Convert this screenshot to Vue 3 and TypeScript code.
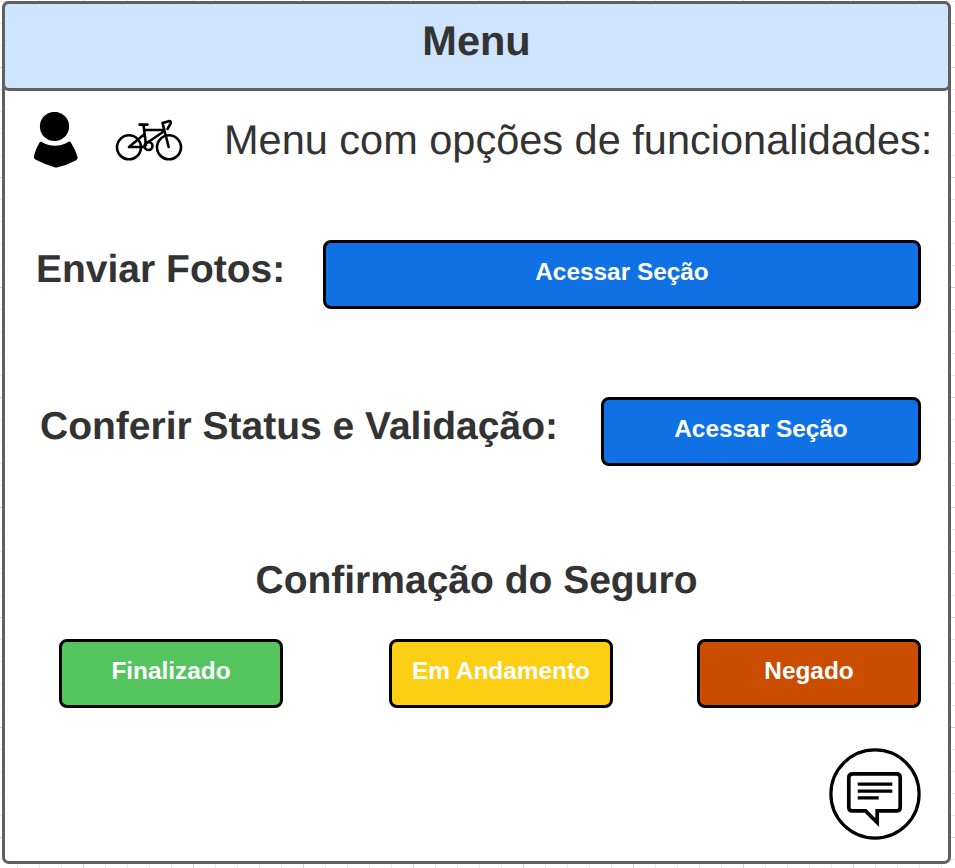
<script setup lang="ts">
interface StatusOption {
  label: string
  tone: string
}

interface Section {
  title: string
  action: string
  kind: string
}

const sections: Section[] = [
  { title: 'Enviar Fotos:', action: 'Acessar Seção', kind: 'photos' },
  { title: 'Conferir Status e Validação:', action: 'Acessar Seção', kind: 'validation' },
]

const statuses: StatusOption[] = [
  { label: 'Finalizado', tone: 'done' },
  { label: 'Em Andamento', tone: 'progress' },
  { label: 'Negado', tone: 'denied' },
]
</script>

<template>
  <div class="canvas">
    <main class="frame">
      <header class="header"><h1>Menu</h1></header>

      <section class="intro">
        <svg class="user" viewBox="0 0.6 46 56" aria-hidden="true">
          <circle cx="21.500" cy="15" r="14.6" />
          <path d="M8.2 30.4C16.5 35.7 27.500 35.700 35.500 30.400Q37 29.700 38 31.300Q42.500 38.500 44.600 45.500Q45 48 42.700 49.200Q33.500 54.200 23.800 56Q22.600 56.200 21.400 55.800Q11.500 53 2.300 48.200Q.500 47.200 .900 44.800Q2.600 37.500 6.500 31.200Q7.200 29.900 8.200 30.400Z" />
        </svg>
        <svg class="bike" viewBox="0 0 68 42" aria-hidden="true">
          <circle cx="14" cy="28.300" r="12" />
          <circle cx="54" cy="28.300" r="12" />
          <circle cx="33.500" cy="27" r="4" />
          <path d="M24.500 5.600H32.500M28.500 6L31 26M29 11H48M14 28H30M14 28L29 15.500M32.500 23.500L49.500 12M53.700 28L47.500 4L54.500 2Q56.400 2.200 55.600 4.500L52.500 10" />
        </svg>
        <p>Menu com opções de funcionalidades:</p>
      </section>

      <section v-for="item in sections" :key="item.kind" class="row" :class="item.kind">
        <h2>{{ item.title }}</h2>
        <button type="button" class="btn">{{ item.action }}</button>
      </section>

      <h2 class="confirm">Confirmação do Seguro</h2>
      <div class="statuses">
        <button v-for="s in statuses" :key="s.tone" type="button" class="btn" :class="s.tone">{{ s.label }}</button>
      </div>

      <footer class="footer">
        <button type="button" class="chat" aria-label="Chat">
          <svg viewBox="0 0 92 92" aria-hidden="true">
            <circle class="ring" cx="46" cy="46" r="44.100" />
            <path class="bubble" d="M24 25.800H67.500Q71.200 25.800 71.200 29.500V59.200Q71.200 62.900 67.500 62.900H48.200V74.500L36.500 62.900H23.500Q19.800 62.900 19.800 59.200V29.500Q19.800 25.800 24 25.800Z" />
            <path class="lines" d="M28.700 36.200H63.300M28.700 43.200H63.300M28.700 49.800H49.700" />
          </svg>
        </button>
      </footer>
    </main>
  </div>
</template>

<style>
body {
  margin: 0;
  overflow: hidden;
}
</style>

<style scoped>
* {
  box-sizing: border-box;
}

.canvas {
  width: 955px;
  height: 868px;
  padding: 1px 4px 4px 2px;
  font-family: "Liberation Sans", Arial, sans-serif;
  color: #333;
  text-rendering: geometricPrecision;
  background-color: #fff;
  background-image:
    linear-gradient(#d4d4d4 1px, transparent 1px),
    linear-gradient(90deg, #d4d4d4 1px, transparent 1px),
    linear-gradient(#e8e8e8 1px, transparent 1px),
    linear-gradient(90deg, #e8e8e8 1px, transparent 1px);
  background-size: 110px 110px, 110px 110px, 22px 22px, 22px 22px;
  background-position: 0 67px, 83px 0, 0 1px, 17px 0;
}

.frame {
  width: 949px;
  height: 863px;
  border: 3px solid #606060;
  border-radius: 7px;
  background: #fff;
}

h1,
h2,
p {
  margin: 0;
  white-space: nowrap;
}

h1,
p {
  font-size: 41.5px;
  line-height: 48px;
}

h2 {
  font-size: 39px;
  line-height: 46px;
}

.header {
  height: 90px;
  margin: -3px -3px 0;
  padding-top: 13px;
  border: 3px solid #606060;
  border-radius: 7px;
  background: #cfe4ff;
  text-align: center;
}

.intro {
  display: flex;
  align-items: flex-start;
  height: 149px;
  padding: 21px 0 0 28px;
}

.intro svg {
  flex: none;
}

.intro p {
  margin: 4px 0 0 41px;
}

.user {
  width: 46px;
  height: 56px;
}

.bike {
  width: 68px;
  height: 42px;
  margin: 7px 0 0 36px;
  fill: none;
  stroke: #000;
  stroke-width: 2.6;
  stroke-linecap: round;
  stroke-linejoin: round;
}

.row {
  display: flex;
  justify-content: space-between;
  align-items: flex-start;
  height: 157px;
  padding: 0 27px 0 31px;
}

.row h2 {
  margin-top: 7px;
}

.validation {
  padding-left: 35px;
}

.btn {
  height: 69px;
  padding: 0 0 6px;
  border: 3px solid #000;
  border-radius: 8px;
  background: #1071e5;
  color: #fff;
  font: bold 24.4px/30px "Liberation Sans", Arial, sans-serif;
  white-space: nowrap;
}

.photos .btn {
  width: 598px;
}

.validation .btn {
  width: 320px;
}

.confirm {
  margin-top: 4px;
  text-align: center;
}

.statuses {
  display: grid;
  grid-template-columns: 224px 224px 224px;
  column-gap: 106px;
  margin-top: 35px;
  padding-left: 54px;
}

.statuses .denied {
  margin: 0 22px 0 -22px;
  background: #cb4d00;
}

.statuses .done {
  background: #54c45e;
}

.statuses .progress {
  background: #fcce14;
}

.footer {
  display: flex;
  justify-content: flex-end;
  padding: 40px 27px 0 0;
}

.chat {
  width: 92px;
  height: 92px;
  padding: 0;
  border: 0;
  background: none;
}

.chat svg {
  display: block;
  fill: none;
  stroke: #000;
}

.ring {
  fill: #fff;
  stroke-width: 3.2;
}

.bubble {
  stroke-width: 3.7;
}

.lines {
  stroke-width: 3.3;
}
</style>
